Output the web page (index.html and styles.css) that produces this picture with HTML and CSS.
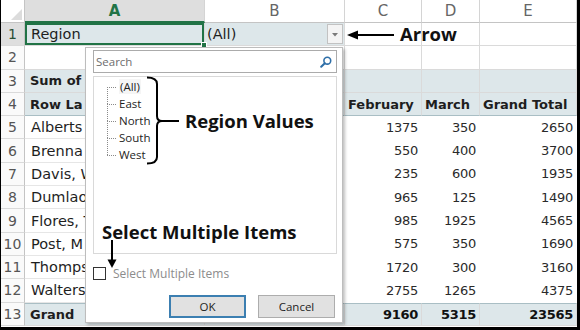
FILE: index.html
```html
<!DOCTYPE html>
<html>
<head>
<meta charset="utf-8">
<link rel="stylesheet" href="styles.css">
</head>
<body>
<div class="frame">
  <div class="sheet">
    <div class="c corner"><span class="tri"></span></div>
    <div class="c ch sel">A</div>
    <div class="c ch">B</div>
    <div class="c ch">C</div>
    <div class="c ch">D</div>
    <div class="c ch">E</div>

    <div class="c rh rsel">1</div>
    <div class="c pv active">Region<span class="handle"></span></div>
    <div class="c pv bcell"><span>(All)</span><span class="dd"><svg width="8" height="5" viewBox="0 0 8 5"><path d="M1 1h6L4 4.5z" fill="#7a7a7a"/></svg></span></div>
    <div class="c"></div><div class="c"></div><div class="c"></div>

    <div class="c rh">2</div>
    <div class="c"></div><div class="c"></div><div class="c"></div><div class="c"></div><div class="c"></div>

    <div class="c rh">3</div>
    <div class="c pv b">Sum of</div>
    <div class="c pv"></div><div class="c pv"></div><div class="c pv"></div><div class="c pv"></div>

    <div class="c rh">4</div>
    <div class="c pv b hdr">Row La</div>
    <div class="c pv b hdr"></div>
    <div class="c pv b hdr lbl">February</div>
    <div class="c pv b hdr lbl">March</div>
    <div class="c pv b hdr lbl">Grand Total</div>

    <div class="c rh">5</div>
    <div class="c nm">Alberts</div><div class="c n"></div><div class="c n">1375</div><div class="c n">350</div><div class="c n">2650</div>
    <div class="c rh">6</div>
    <div class="c nm">Brenna</div><div class="c n"></div><div class="c n">550</div><div class="c n">400</div><div class="c n">3700</div>
    <div class="c rh">7</div>
    <div class="c nm">Davis, W</div><div class="c n"></div><div class="c n">235</div><div class="c n">600</div><div class="c n">1935</div>
    <div class="c rh">8</div>
    <div class="c nm">Dumlao</div><div class="c n"></div><div class="c n">965</div><div class="c n">125</div><div class="c n">1490</div>
    <div class="c rh">9</div>
    <div class="c nm">Flores, T</div><div class="c n"></div><div class="c n">985</div><div class="c n">1925</div><div class="c n">4565</div>
    <div class="c rh">10</div>
    <div class="c nm">Post, M</div><div class="c n"></div><div class="c n">575</div><div class="c n">350</div><div class="c n">1690</div>
    <div class="c rh">11</div>
    <div class="c nm">Thomps</div><div class="c n"></div><div class="c n">1720</div><div class="c n">300</div><div class="c n">3160</div>
    <div class="c rh">12</div>
    <div class="c nm">Walters</div><div class="c n"></div><div class="c n">2755</div><div class="c n">1265</div><div class="c n">4375</div>

    <div class="c rh">13</div>
    <div class="c pv b tot">Grand</div>
    <div class="c pv b n tot"></div>
    <div class="c pv b n tot">9160</div>
    <div class="c pv b n tot">5315</div>
    <div class="c pv b n tot">23565</div>
  </div>

  <div class="popup">
    <div class="search">
      <span class="ph">Search</span>
      <svg class="mag" width="12" height="12" viewBox="0 0 12 12"><circle cx="7.3" cy="4.7" r="3.4" fill="none" stroke="#2f6fa8" stroke-width="1.6"/><path d="M4.8 7.2L1.2 10.8" stroke="#2f6fa8" stroke-width="2" stroke-linecap="round"/></svg>
    </div>
    <div class="list">
      <ul class="tree">
        <li class="first"><span class="allsel">(All)</span></li>
        <li>East</li>
        <li>North</li>
        <li>South</li>
        <li class="last">West</li>
      </ul>
    </div>
    <div class="multi"><span class="box"></span><span class="mlabel">Select Multiple Items</span></div>
    <div class="btns">
      <button class="btn ok">OK</button>
      <button class="btn">Cancel</button>
    </div>
  </div>

  <svg class="notes" width="580" height="330" viewBox="0 0 580 330">
    <line x1="355" y1="35" x2="394" y2="35" stroke="#000" stroke-width="2"/>
    <path d="M347 35L358 30.5V39.5Z" fill="#000"/>
    <path d="M147 77.5Q157 77.5 157 84V116Q157 121 162 121Q157 121 157 126V157Q157 163.5 147 163.5" fill="none" stroke="#000" stroke-width="2"/>
    <line x1="161" y1="121" x2="179" y2="121" stroke="#000" stroke-width="2"/>
    <line x1="112" y1="240" x2="112" y2="261" stroke="#000" stroke-width="2"/>
    <path d="M107.5 259.5H116.5L112 268Z" fill="#000"/>
  </svg>
  <div class="note n-arrow">Arrow</div>
  <div class="note n-region">Region Values</div>
  <div class="note n-multi">Select Multiple Items</div>
</div>
</body>
</html>
```

FILE: styles.css
```css
* { box-sizing: border-box; margin: 0; padding: 0; }
html, body { width: 580px; height: 330px; overflow: hidden; background: #fff; }

.frame {
  position: relative;
  width: 580px;
  height: 330px;
  border-left: 1px solid #000;
  border-right: 3px solid #000;
  border-bottom: 3px solid #000;
  overflow: hidden;
  font-family: "DejaVu Sans", sans-serif;
}

.sheet {
  display: grid;
  grid-template-columns: 24px 180px 140px 77px 58px 97px;
  grid-template-rows: 23px repeat(13, 23.3px);
}

.c {
  position: relative;
  display: flex;
  align-items: center;
  padding: 0 5px;
  border-right: 1px solid #dadada;
  border-bottom: 1px solid #dadada;
  font-size: 14px;
  color: #1e1e1e;
  white-space: nowrap;
  overflow: hidden;
}

.corner { background: #fff; border-bottom-color: #c4c4c4; border-right-color: #c4c4c4; }
.tri {
  position: absolute;
  right: 2px;
  bottom: 2px;
  width: 0; height: 0;
  border-left: 11px solid transparent;
  border-bottom: 11px solid #dcdcdc;
}

.ch {
  justify-content: center;
  font-size: 15px;
  color: #666;
  background: #fff;
  border-bottom-color: #c4c4c4;
  border-right-color: #d4d4d4;
}
.ch.sel {
  background: #dedede;
  color: #217346;
  font-weight: bold;
  border-bottom: 2px solid #217346;
}

.rh {
  justify-content: center;
  padding: 0;
  font-size: 14px;
  color: #555;
  background: #fafafa;
  border-right-color: #c4c4c4;
}
.rh.rsel { background: #dedede; color: #2a4f36; }

.pv { background: #dde7ea; }
.b { font-weight: bold; font-size: 13px; }
.hdr { border-bottom: 1px solid #a9bec4; }
.lbl { padding-left: 3px; }
.tot { border-top: 1px solid #a9bec4; }

.active {
  padding-left: 6px;
  font-size: 14.5px;
  overflow: visible;
  box-shadow: inset 0 0 0 2px #217346;
  z-index: 2;
}
.handle {
  position: absolute;
  right: -3px;
  bottom: -3px;
  width: 6px;
  height: 6px;
  background: #217346;
  border: 1px solid #fff;
}

.bcell { justify-content: space-between; padding: 0 1px 0 2px; font-size: 14.5px; }
.dd {
  display: flex;
  align-items: center;
  justify-content: center;
  width: 16px;
  height: 20px;
  background: #f4f4f4;
  border: 1px solid #c2c2c2;
}

.nm { font-size: 14.5px; padding-left: 6px; border-right-color: #dadada; border-bottom-color: #e6e6e6; }
.n { justify-content: flex-end; padding-right: 3px; font-size: 13px; letter-spacing: -0.3px; color: #2a2a2a; }
.c.n:not(.pv) { border-color: transparent; }
.pv.n { color: #111; }

/* filter popup */
.popup {
  position: absolute;
  left: 84px;
  top: 47px;
  width: 258px;
  height: 276px;
  background: #fff;
  border: 1px solid #bdbdbd;
  box-shadow: 2px 2px 3px rgba(0,0,0,0.25);
  display: flex;
  flex-direction: column;
  padding: 2px 0 0 7px;
  font-family: "Open Sans", sans-serif;
  z-index: 5;
}
.search {
  width: 244px;
  height: 23px;
  border: 1px solid #ababab;
  display: flex;
  align-items: center;
  justify-content: space-between;
  padding: 0 4px 0 2px;
}
.ph { font-size: 11.5px; color: #6d6d6d; }
.mag { display: block; }

.list {
  margin-top: 3px;
  width: 244px;
  height: 178px;
  border: 1px solid #d9d9d9;
  padding: 1px 0 0 13px;
}
.tree { list-style: none; }
.tree li {
  position: relative;
  height: 17px;
  line-height: 17px;
  padding-left: 12px;
  font-size: 11.5px;
  color: #1e1e1e;
}
.tree li::before {
  content: "";
  position: absolute;
  left: 0;
  top: 9px;
  width: 9px;
  border-top: 1px dotted #8a8a8a;
}
.tree li::after {
  content: "";
  position: absolute;
  left: 0;
  top: 9px;
  height: 17px;
  border-left: 1px dotted #8a8a8a;
}
.tree li.last::after { display: none; }
.allsel { padding: 0 1px; background: #f5f5f5; }

.multi {
  margin-top: 13px;
  height: 13px;
  display: flex;
  align-items: center;
  gap: 7px;
}
.box { width: 13px; height: 13px; border: 1px solid #333; background: #fff; }
.mlabel { font-size: 12px; color: #8c8c8c; }

.btns {
  margin-top: 15px;
  margin-left: 76px;
  display: flex;
  gap: 12px;
}
.btn {
  width: 77px;
  height: 23px;
  font-family: "Open Sans", sans-serif;
  font-size: 11.5px;
  color: #1e1e1e;
  background: #e1e1e1;
  border: 1px solid #adadad;
}
.btn.ok { border: 2px solid #3c7fb1; }

/* annotations */
.notes { position: absolute; left: -1px; top: 0; z-index: 8; pointer-events: none; }
.note {
  position: absolute;
  z-index: 9;
  font-family: "Open Sans", sans-serif;
  font-weight: bold;
  font-size: 18.5px;
  line-height: 24px;
  color: #111;
  white-space: nowrap;
}
.n-arrow { left: 399px; top: 22px; }
.n-region { left: 184px; top: 109px; }
.n-multi { left: 101px; top: 220px; }
```
